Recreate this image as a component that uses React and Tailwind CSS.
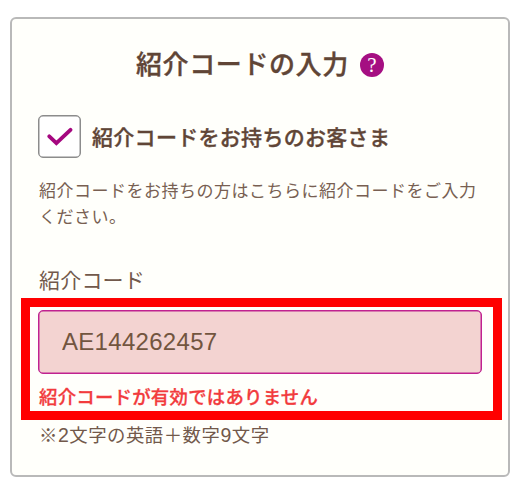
import React, { useState } from 'react';

const HelpIcon = () => (
  <span className="mt-[4px] ml-[11px] flex h-6 w-6 items-center justify-center rounded-full bg-[#a50f82] font-['Liberation_Serif','Noto_Sans_CJK_JP',serif] text-[21px] leading-6 font-normal tracking-normal text-white [-webkit-text-stroke:0]">
    ?
  </span>
);

const CheckBox = ({ checked, onChange }) => (
  <button
    type="button"
    role="checkbox"
    aria-checked={checked}
    onClick={() => onChange(!checked)}
    className="flex h-[43px] w-[43px] shrink-0 items-center justify-center rounded-[5px] border border-[#8c8c8c] bg-white shadow-[inset_0_0_0_0.5px_#8c8c8c]"
  >
    {checked && (
      <svg viewBox="0 0 26 20" className="h-5 w-[26px]" fill="none" stroke="#a5077f" strokeWidth="3.8" strokeLinecap="round">
        <path d="M2.3 9.3 L9.4 16.2 L23.5 2.8" />
      </svg>
    )}
  </button>
);

const App = () => {
  const [hasCode, setHasCode] = useState(true);
  const [code, setCode] = useState('AE144262457');

  return (
    <main className="h-[490px] w-[520px] bg-white pt-[17px] pl-[10px] font-['Noto_Sans_CJK_JP',sans-serif] text-[#604536]">
      <section className="h-[460px] w-[500px] rounded-md border-2 border-[#b9b9b9] bg-[#fffffb] whitespace-nowrap">
        <h1 className="mt-[24px] ml-[124px] flex h-10 items-center text-[26px] leading-10 font-medium tracking-[0.6px] [-webkit-text-stroke:0.35px]">
          紹介コードの入力
          <HelpIcon />
        </h1>

        <div className="mt-[32px] ml-[26px] flex h-[43px] items-center">
          <CheckBox checked={hasCode} onChange={setHasCode} />
          <span className="ml-[11px] text-[21px] leading-[43px] font-medium tracking-[0.3px] [-webkit-text-stroke:0.35px]">
            紹介コードをお持ちのお客さま
          </span>
        </div>

        <p className="mt-[19px] ml-[27px] text-[17px] leading-[26px] tracking-[0.5px] text-[#785f52]">
          紹介コードをお持ちの方はこちらに紹介コードをご入力
          <br />
          ください。
        </p>

        <label htmlFor="code" className="mt-[34px] ml-[27px] block text-[21px] leading-8 tracking-[0.2px] text-[#72594b]">
          紹介コード
        </label>

        {/* Highlight frame round the rejected code */}
        <div className="mt-[3px] ml-[9px] h-[122px] w-[481px] border-9 border-[#ff0000] pt-[3px] pl-2">
          <input
            id="code"
            value={code}
            onChange={(e) => setCode(e.target.value)}
            className="block h-[64px] w-[444px] rounded-[5px] border border-[#c02290] bg-[#f3d3d1] pl-[23px] font-['Liberation_Sans','Noto_Sans_CJK_JP',sans-serif] text-[24px] tracking-[0.3px] text-[#72553f] shadow-[inset_0_0_0_0.5px_#c02290] outline-none"
          />
          <p className="mt-[8px] ml-px text-[18.4px] leading-[28px] font-medium tracking-[0.25px] text-[#f23b3d] [-webkit-text-stroke:0.3px]">
            紹介コードが有効ではありません
          </p>
        </div>

        <p className="mt-[1px] ml-[27px] font-['Liberation_Sans','Noto_Sans_CJK_JP',sans-serif] text-[18.4px] leading-[28px] tracking-[0.5px] text-[#72594b]">
          ※<span className="text-[19.5px]">2</span>文字の英語＋数字<span className="text-[19.5px]">9</span>文字
        </p>
      </section>
    </main>
  );
};

export default App;
